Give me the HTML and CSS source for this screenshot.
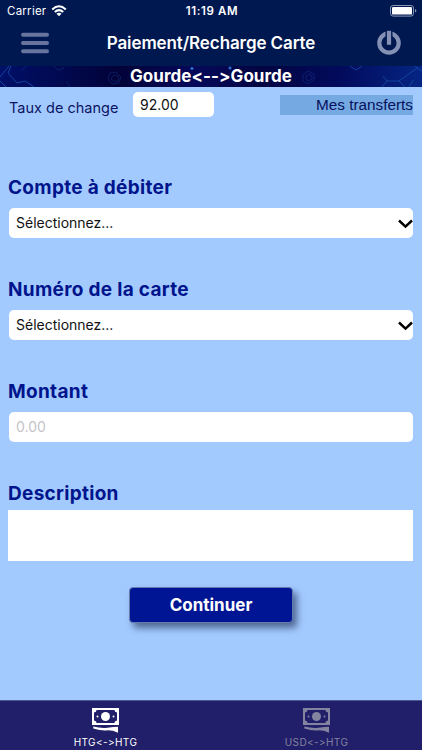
FILE: index.html
```html
<!DOCTYPE html>
<html lang="fr">
<head>
<meta charset="utf-8">
<meta name="viewport" content="width=device-width">
<title>Paiement/Recharge Carte</title>
<link rel="stylesheet" href="styles.css">
</head>
<body>
<div class="app">
  <header class="header">
    <div class="status">
      <div class="carrier"><span>Carrier</span>
        <svg width="16" height="12" viewBox="0 0 16 12" fill="none" stroke="#fff" stroke-width="2"><path d="M1.2 4.4Q8-1.8 14.8 4.4M3.8 7Q8 3.2 12.2 7"/><path d="M8 11.2L5.5 8.7Q8 6.8 10.5 8.7Z" fill="#fff" stroke="none"/></svg>
      </div>
      <span class="time">11:19 AM</span>
      <svg class="battery" width="27" height="12" viewBox="0 0 27 12"><rect x=".5" y=".5" width="23" height="10.6" rx="2.6" fill="none" stroke="#8c98b8"/><rect x="2" y="2" width="20" height="7.6" rx="1.2" fill="#fff"/><path d="M25 4v3.6q1.4-.6 1.4-1.8T25 4Z" fill="#8c98b8"/></svg>
    </div>
    <div class="nav">
      <svg width="30" height="22" viewBox="0 0 30 22" stroke="#66749e" stroke-width="4" stroke-linecap="round"><path d="M3 2.8h24M3 11h24M3 19.2h24"/></svg>
      <h1 class="title">Paiement/Recharge Carte</h1>
      <svg width="26" height="26" viewBox="0 0 26 26" fill="none" stroke="#8490b4" stroke-width="4.2"><circle cx="13" cy="13" r="9.7"/><path d="M13 0v14.8" stroke="#001850" stroke-width="7"/><path d="M13 .8v14"/></svg>
    </div>
  </header>
  <div class="banner">
    <svg class="pattern" width="422" height="21" viewBox="0 0 422 21" fill="none" stroke="#1c56b4" stroke-width="1">
      <path d="M0 11L9 0M0 15l6 6M11 0l-3 7 9 10 8-2 9 6" opacity=".75"/>
      <path d="M21 5l5-5M54 0l4 4 6-2M70 21l-4-6" opacity=".3"/>
      <path d="M110 7l6-1 5 5-2 6-7 1-4-5zM114 9l4 1 1 4-4 2-4-3z" opacity=".3"/>
      <path d="M303 9l5-4 6 3v6l-6 4-5-3zM306 10l3-2 3 2v3l-4 2-2-2z" opacity=".3"/>
      <path d="M350 0l6 4 6-4M382 21l5-6h12l6 6M387 15l-4-5M399 15l18-13 5 3M417 2l-2-2M409 21l4-7" opacity=".65"/>
      <circle cx="192" cy="2.5" r="1.2" fill="#56a8ff" stroke="#174ba8"/>
      <circle cx="230" cy="2" r="1.2" fill="#56a8ff" stroke="#174ba8"/>
    </svg>
    <span class="banner-text">Gourde&lt;--&gt;Gourde</span>
  </div>
  <main class="content">
    <div class="rate">
      <span class="rate-label">Taux de change</span>
      <span class="rate-value">92.00</span>
      <a class="transfers">Mes transferts</a>
    </div>
    <section class="group">
      <h2 class="label">Compte à débiter</h2>
      <div class="field"><span>Sélectionnez...</span><svg width="15" height="10" viewBox="0 0 15 10" fill="none" stroke="#000" stroke-width="2.5"><path d="M1 1.5L7.5 7.6 14 1.5"/></svg></div>
    </section>
    <section class="group">
      <h2 class="label">Numéro de la carte</h2>
      <div class="field"><span>Sélectionnez...</span><svg width="15" height="10" viewBox="0 0 15 10" fill="none" stroke="#000" stroke-width="2.5"><path d="M1 1.5L7.5 7.6 14 1.5"/></svg></div>
    </section>
    <section class="group">
      <h2 class="label">Montant</h2>
      <div class="field placeholder"><span>0.00</span></div>
    </section>
    <section class="group">
      <h2 class="label">Description</h2>
      <div class="area"></div>
    </section>
    <button class="continue">Continuer</button>
  </main>
  <footer class="tabs">
    <div class="tab active">
      <svg width="27" height="25" viewBox="0 0 27 25" fill="currentColor"><path fill-rule="evenodd" d="M0 0h27v17H0zM4.6 2A2.8 2.8 0 0 1 2 4.6v7.8A2.8 2.8 0 0 1 4.6 15h17.8a2.8 2.8 0 0 1 2.6-2.6V4.6A2.8 2.8 0 0 1 22.4 2z"/><circle cx="13.5" cy="8.5" r="4.5"/><circle cx="5.5" cy="8.5" r="1"/><circle cx="21.5" cy="8.5" r="1"/><path d="M1.3 18.6Q9 20.6 15.5 19.8T26 18.8V24.8Q20 22 14.5 22.4T1.3 20.6Z"/></svg>
      <span class="tab-label">HTG&lt;-&gt;HTG</span>
    </div>
    <div class="tab">
      <svg width="27" height="25" viewBox="0 0 27 25" fill="currentColor"><path fill-rule="evenodd" d="M0 0h27v17H0zM4.6 2A2.8 2.8 0 0 1 2 4.6v7.8A2.8 2.8 0 0 1 4.6 15h17.8a2.8 2.8 0 0 1 2.6-2.6V4.6A2.8 2.8 0 0 1 22.4 2z"/><circle cx="13.5" cy="8.5" r="4.5"/><circle cx="5.5" cy="8.5" r="1"/><circle cx="21.5" cy="8.5" r="1"/><path d="M1.3 18.6Q9 20.6 15.5 19.8T26 18.8V24.8Q20 22 14.5 22.4T1.3 20.6Z"/></svg>
      <span class="tab-label">USD&lt;-&gt;HTG</span>
    </div>
  </footer>
</div>
</body>
</html>
```
FILE: styles.css
```css
* { box-sizing: border-box; }
body { margin: 0; }
h1, h2 { margin: 0; }
svg { display: block; flex: none; }
.app {
  width: 422px;
  height: 750px;
  display: flex;
  flex-direction: column;
  overflow: hidden;
  background: #a3caff;
  font-family: Inter, "Liberation Sans", sans-serif;
  font-feature-settings: "calt" 0;
  white-space: nowrap;
}
.header { height: 66px; flex: none; background: #001850; color: #fff; }
.status {
  height: 22px;
  display: grid;
  grid-template-columns: 1fr auto 1fr;
  align-items: center;
  padding: 0 5px 0 7px;
  font-size: 11.5px;
  line-height: 22px;
}
.carrier { display: flex; align-items: center; gap: 5px; letter-spacing: .25px; }
.time { font-weight: 600; font-size: 11.5px; letter-spacing: .6px; }
.battery { justify-self: end; }
.nav { height: 42px; display: flex; align-items: center; justify-content: space-between; padding: 0 20px; }
.title { margin-right: 4px; font-size: 17px; line-height: 22px; font-weight: 600; letter-spacing: -.1px; }
.banner {
  height: 21px;
  flex: none;
  position: relative;
  background: linear-gradient(90deg, #001068, #020238 28%, #06095a 46%, #030541 62%, #020a5b 80%, #052583);
  text-align: center;
}
.pattern { position: absolute; inset: 0; }
.banner-text { position: relative; display: block; color: #fff; font-size: 17px; line-height: 21px; font-weight: 700; letter-spacing: .05px; }
.content { flex: 1; display: flex; flex-direction: column; padding: 0 8px; }
.rate { height: 83px; display: flex; align-items: flex-start; padding-top: 5px; }
.rate-label { width: 125px; padding: 6px 0 0 1px; color: #0c1564; font-size: 14.5px; line-height: 20px; }
.rate-value { width: 81px; height: 25px; padding-left: 7px; border-radius: 5px; background: #fff; color: #111; font-size: 14px; line-height: 25px; }
.transfers {
  width: 133px;
  height: 20px;
  margin: 3px 1px 0 auto;
  background: #75a9e1;
  color: #07105d;
  font: 15.3px/20px "Liberation Sans", sans-serif;
  text-align: right;
}
.group { height: 102px; flex: none; }
.label { height: 38px; padding-top: 5px; color: #00148c; font-size: 19px; line-height: 26px; font-weight: 700; letter-spacing: .3px; }
.field {
  height: 30px;
  margin-left: 1px;
  margin-right: 1px;
  padding-left: 7px;
  display: flex;
  align-items: center;
  justify-content: space-between;
  background: #fff;
  border-radius: 5px;
  color: #111;
  font-size: 14px;
  line-height: 30px;
}
.field svg { margin-top: 2px; }
.placeholder { color: #c4c4c8; }
.area { height: 51px; margin: -4px 0 0; width: 405px; background: #fff; }
.continue {
  width: 164px;
  height: 36px;
  margin: 9px 0 0 121px;
  flex: none;
  padding: 0;
  border: 1px solid #667cae;
  border-radius: 4px;
  background: #001594;
  color: #fff;
  font: 700 17px/34px Inter, "Liberation Sans", sans-serif;
  box-shadow: 4px 5px 7px rgba(35, 50, 90, .65);
}
.tabs { height: 50px; flex: none; display: grid; grid-template-columns: 1fr 1fr; background: #211f69; border-top: 1px solid #4d5790; }
.tab { display: flex; flex-direction: column; align-items: center; padding-top: 7px; color: #8484a0; }
.active { color: #fff; }
.tab-label { margin-top: 2px; font-size: 10px; line-height: 14px; letter-spacing: .4px; }
```
